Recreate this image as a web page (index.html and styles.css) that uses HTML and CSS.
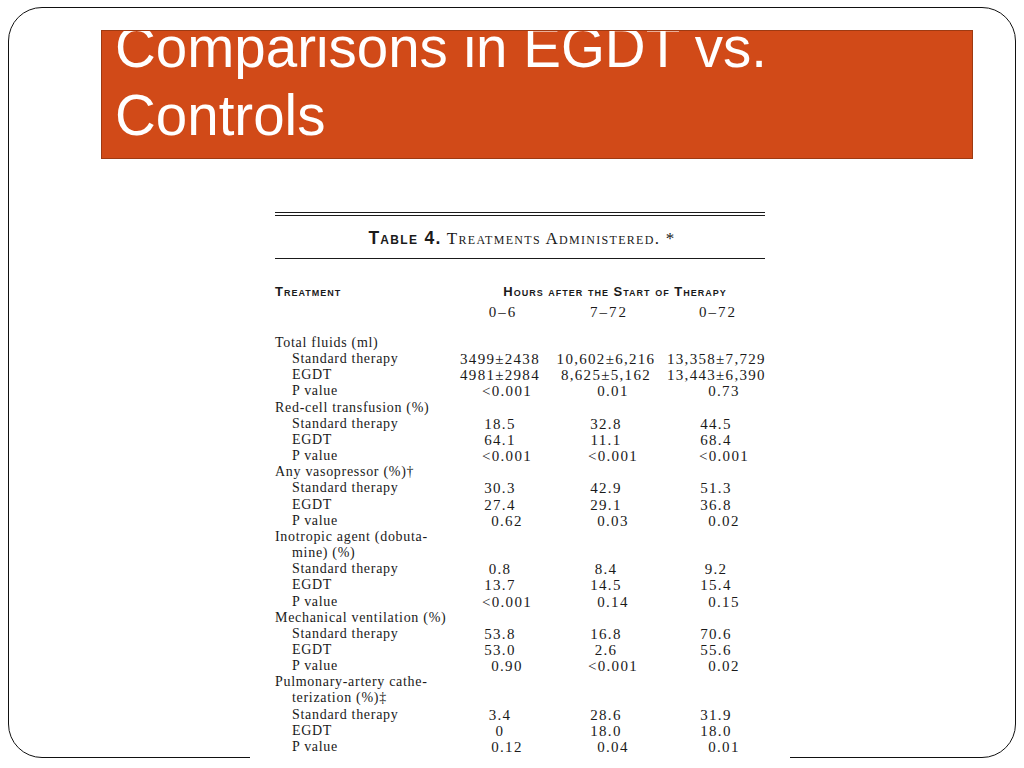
FILE: index.html
```html
<!DOCTYPE html>
<html lang="en">
<head>
<meta charset="utf-8">
<title>Comparisons in EGDT vs. Controls</title>
<link rel="stylesheet" href="styles.css">
</head>
<body>
<div class="slide">
  <div class="title-box">
    <h1 class="title">Comparisons in EGDT vs.<br>Controls</h1>
  </div>
  <div class="figure">
    <div class="rule-double"></div>
    <p class="caption"><span class="cap-label">Table 4.</span> Treatments Administered. *</p>
    <div class="rule"></div>
    <div class="grid head">
      <div class="h-treat">Treatment</div>
      <div class="h-hours">Hours after the Start of Therapy</div>
    </div>
    <div class="grid sub">
      <div></div>
      <div class="n">0–6</div>
      <div class="n">7–72</div>
      <div class="n c3">0–72</div>
    </div>
    <div class="grid rows">
      <div class="lbl group">Total fluids (ml)</div>
      <div class="lbl in">Standard therapy</div><div class="n">3499±2438</div><div class="n">10,602±6,216</div><div class="n c3">13,358±7,729</div>
      <div class="lbl in">EGDT</div><div class="n">4981±2984</div><div class="n">8,625±5,162</div><div class="n c3">13,443±6,390</div>
      <div class="lbl in">P value</div><div class="n p">&lt;0.001</div><div class="n p">0.01</div><div class="n c3 p">0.73</div>

      <div class="lbl group">Red-cell transfusion (%)</div>
      <div class="lbl in">Standard therapy</div><div class="n">18.5</div><div class="n">32.8</div><div class="n c3">44.5</div>
      <div class="lbl in">EGDT</div><div class="n">64.1</div><div class="n">11.1</div><div class="n c3">68.4</div>
      <div class="lbl in">P value</div><div class="n p">&lt;0.001</div><div class="n p">&lt;0.001</div><div class="n c3 p">&lt;0.001</div>

      <div class="lbl group">Any vasopressor (%)†</div>
      <div class="lbl in">Standard therapy</div><div class="n">30.3</div><div class="n">42.9</div><div class="n c3">51.3</div>
      <div class="lbl in">EGDT</div><div class="n">27.4</div><div class="n">29.1</div><div class="n c3">36.8</div>
      <div class="lbl in">P value</div><div class="n p">0.62</div><div class="n p">0.03</div><div class="n c3 p">0.02</div>

      <div class="lbl group">Inotropic agent (dobuta-</div>
      <div class="lbl in group">mine) (%)</div>
      <div class="lbl in">Standard therapy</div><div class="n">0.8</div><div class="n">8.4</div><div class="n c3">9.2</div>
      <div class="lbl in">EGDT</div><div class="n">13.7</div><div class="n">14.5</div><div class="n c3">15.4</div>
      <div class="lbl in">P value</div><div class="n p">&lt;0.001</div><div class="n p">0.14</div><div class="n c3 p">0.15</div>

      <div class="lbl group">Mechanical ventilation (%)</div>
      <div class="lbl in">Standard therapy</div><div class="n">53.8</div><div class="n">16.8</div><div class="n c3">70.6</div>
      <div class="lbl in">EGDT</div><div class="n">53.0</div><div class="n">2.6</div><div class="n c3">55.6</div>
      <div class="lbl in">P value</div><div class="n p">0.90</div><div class="n p">&lt;0.001</div><div class="n c3 p">0.02</div>

      <div class="lbl group">Pulmonary-artery cathe-</div>
      <div class="lbl in group">terization (%)‡</div>
      <div class="lbl in">Standard therapy</div><div class="n">3.4</div><div class="n">28.6</div><div class="n c3">31.9</div>
      <div class="lbl in">EGDT</div><div class="n">0</div><div class="n">18.0</div><div class="n c3">18.0</div>
      <div class="lbl in">P value</div><div class="n p">0.12</div><div class="n p">0.04</div><div class="n c3 p">0.01</div>
    </div>
    <div class="rule rule-bottom"></div>
  </div>
</div>
</body>
</html>
```
FILE: styles.css
```css
html, body {
  margin: 0;
  padding: 0;
  background: #ffffff;
  overflow: hidden;
}

.slide {
  box-sizing: border-box;
  width: 1008px;
  height: 751px;
  margin: 7px 0 0 8px;
  border: 1px solid #111111;
  border-radius: 34px;
}

.title-box {
  box-sizing: border-box;
  width: 872px;
  height: 129px;
  margin: 22px 0 0 92px;
  padding: 0 13px;
  background: #d14a18;
  border: 1px solid #9e3a12;
  overflow: hidden;
}

.title {
  margin: -17px 0 0;
  font-family: "Liberation Sans", Arial, sans-serif;
  font-size: 56.5px;
  line-height: 68px;
  font-weight: normal;
  color: #ffffff;
  white-space: nowrap;
}

.figure {
  box-sizing: border-box;
  width: 540px;
  height: 568px;
  margin: 41px 0 0 241px;
  padding: 12px 25px 0;
  background: #ffffff;
  color: #1a1a1a;
  font-family: "Liberation Serif", "Times New Roman", serif;
}

.rule-double {
  height: 2px;
  border-top: 1px solid #1a1a1a;
  border-bottom: 1px solid #1a1a1a;
}

.caption {
  margin: 12px 0 0;
  padding-left: 4px;
  text-align: center;
  font-size: 17px;
  line-height: 20px;
  font-variant: small-caps;
  letter-spacing: 1.3px;
  white-space: nowrap;
}

.cap-label {
  font-family: "Liberation Sans", Arial, sans-serif;
  font-weight: bold;
  font-size: 17.5px;
  letter-spacing: 1.3px;
}

.rule {
  margin-top: 9px;
  border-top: 1px solid #1a1a1a;
}

.rule-bottom {
  margin-top: 12px;
}

.grid {
  display: grid;
  grid-template-columns: 172px 106px 106px 106px;
}

.head {
  margin-top: 26px;
  font-family: "Liberation Sans", Arial, sans-serif;
  font-weight: bold;
  font-size: 13px;
  line-height: 14px;
  font-variant: small-caps;
  letter-spacing: 1px;
  white-space: nowrap;
}

.h-hours {
  grid-column: 2 / -1;
  text-align: center;
  padding-left: 18px;
}

.sub {
  margin-top: 5px;
  font-size: 15px;
  line-height: 16px;
}

.sub .n {
  letter-spacing: 2px;
  padding-left: 6px;
}

.sub .n.c3 {
  padding-left: 12px;
}

.rows {
  margin-top: 15px;
  font-size: 14px;
  line-height: 16.16px;
}

.lbl {
  white-space: nowrap;
  letter-spacing: 0.7px;
}

.group {
  grid-column: 1 / -1;
}

.in {
  padding-left: 17px;
}

.n {
  text-align: center;
  white-space: nowrap;
  font-size: 15px;
  letter-spacing: 1.3px;
}

.c3 {
  padding-left: 8px;
}

.p {
  padding-left: 14px;
}

.c3.p {
  padding-left: 24px;
}
```
